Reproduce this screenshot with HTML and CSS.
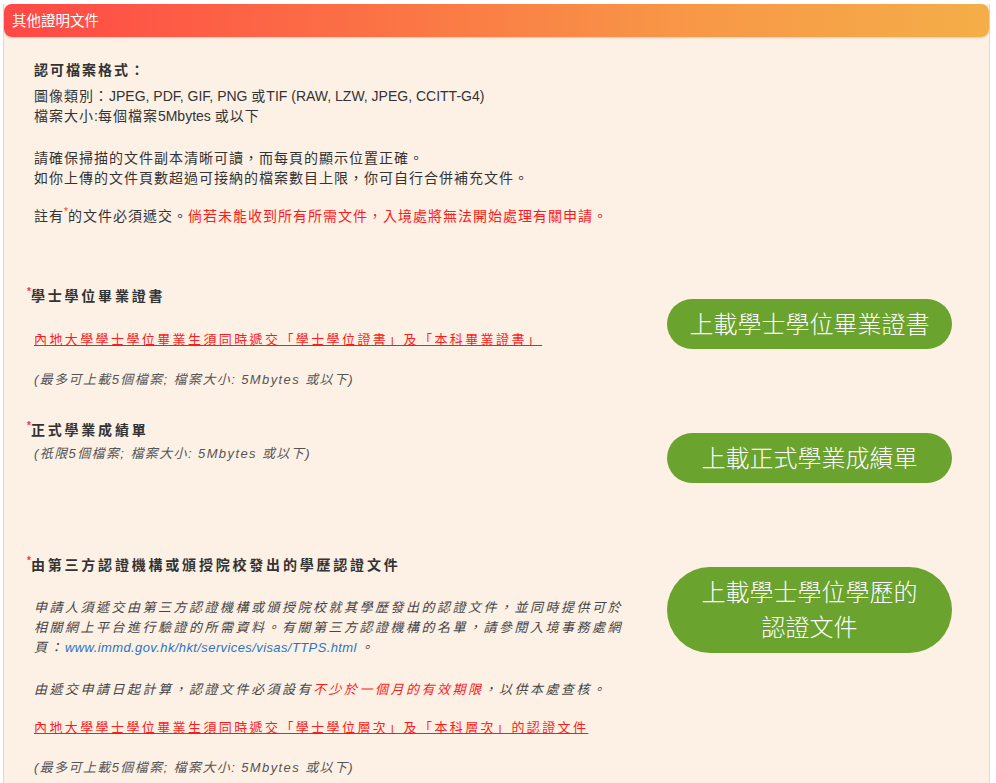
FILE: index.html
```html
<!DOCTYPE html>
<html lang="zh-Hant">
<head>
  <meta charset="UTF-8">
  <title>其他證明文件</title>
  <link rel="stylesheet" href="styles.css">
</head>
<body>
  <div class="panel">
    <div class="panel-head">其他證明文件</div>

    <div class="panel-body">
      <div class="formats">
        <h3 class="formats-title">認可檔案格式：</h3>
        <p class="line">圖像類別：<span class="en">JPEG, PDF, GIF, PNG </span>或<span class="en">TIF (RAW, LZW, JPEG, CCITT-G4)</span><br>檔案大小<span class="en">:</span>每個檔案<span class="en">5Mbytes </span>或以下</p>
        <p class="line gap1">請確保掃描的文件副本清晰可讀，而每頁的顯示位置正確。<br>如你上傳的文件頁數超過可接納的檔案數目上限，你可自行合併補充文件。</p>
        <p class="line gap2">註有<span class="star">*</span>的文件必須遞交。<span class="warn">倘若未能收到所有所需文件，入境處將無法開始處理有關申請。</span></p>
      </div>

      <!-- degree certificate -->
      <div class="doc doc-degree">
        <div class="doc-info">
          <h4 class="doc-title"><span class="star">*</span>學士學位畢業證書</h4>
          <a class="doc-link" href="#">內地大學學士學位畢業生須同時遞交「學士學位證書」及「本科畢業證書」</a>
          <p class="doc-limit">(最多可上載5個檔案; 檔案大小: 5Mbytes 或以下)</p>
        </div>
        <button class="upload-btn" type="button">上載學士學位畢業證書</button>
      </div>

      <!-- transcript -->
      <div class="doc doc-transcript">
        <div class="doc-info">
          <h4 class="doc-title"><span class="star">*</span>正式學業成績單</h4>
          <p class="doc-limit tight">(祇限5個檔案; 檔案大小: 5Mbytes 或以下)</p>
        </div>
        <button class="upload-btn" type="button">上載正式學業成績單</button>
      </div>

      <!-- third party verification -->
      <div class="doc doc-verify">
        <div class="doc-info">
          <h4 class="doc-title"><span class="star">*</span>由第三方認證機構或頒授院校發出的學歷認證文件</h4>
          <p class="doc-text first">申請人須遞交由第三方認證機構或頒授院校就其學歷發出的認證文件，並同時提供可於相關網上平台進行驗證的所需資料。有關第三方認證機構的名單，請參閱入境事務處網頁：<a class="url" href="#">www.immd.gov.hk/hkt/services/visas/TTPS.html</a>。</p>
          <p class="doc-text">由遞交申請日起計算，認證文件必須設有<span class="warn">不少於一個月的有效期限</span>，以供本處查核。</p>
          <a class="doc-link" href="#">內地大學學士學位畢業生須同時遞交「學士學位層次」及「本科層次」的認證文件</a>
          <p class="doc-limit">(最多可上載5個檔案; 檔案大小: 5Mbytes 或以下)</p>
        </div>
        <button class="upload-btn" type="button">上載學士學位學歷的<br>認證文件</button>
      </div>
    </div>
  </div>
</body>
</html>
```

FILE: styles.css
```css
body {
  margin: 0;
  padding: 4px 6px 0 3px;
  background: #ffffff;
  font-family: "Liberation Sans", Arial, "Noto Sans CJK TC", sans-serif;
  color: #333;
  font-size: 14px;
}

.panel {
  background: #fdf1e6;
  border-left: 1px solid #dedad6;
  border-right: 1px solid #dedad6;
  min-height: 800px;
}

.panel-head {
  height: 33px;
  line-height: 34px;
  padding-left: 8px;
  border-radius: 8px;
  background: linear-gradient(to right, #ff4845 0%, #fb7545 40%, #f89847 70%, #f4ae47 100%);
  box-shadow: 0 1px 2px rgba(0,0,0,0.15);
  color: #fff;
  font-size: 14.5px;
}

.panel-body {
  padding: 23px 37px 0 30px;
}

.formats-title {
  margin: 0 0 6px 0;
  font-size: 14px;
  line-height: 20px;
  letter-spacing: 2px;
  font-weight: bold;
}

.line {
  margin: 0;
  line-height: 20px;
  letter-spacing: 1px;
}

.en {
  letter-spacing: 0;
  line-height: 14px;
}

.gap1 { margin-top: 22px; }
.gap2 { margin-top: 18px; }

.star {
  color: #ff3030;
  font-size: 10px;
  vertical-align: top;
  line-height: 12px;
  letter-spacing: 0;
}

.warn {
  color: #ff1a1a;
}

.doc {
  display: flex;
  align-items: flex-start;
  justify-content: space-between;
  margin-left: -7px;
}

.doc-degree { margin-top: 60px; }
.doc-transcript { margin-top: 30px; }
.doc-verify { margin-top: 72px; }

.doc-info {
  display: flex;
  flex-direction: column;
  align-items: flex-start;
}

.doc-title {
  margin: 0;
  font-size: 14px;
  line-height: 20px;
  letter-spacing: 2.8px;
  font-weight: bold;
}

.doc-link {
  margin: 24px 0 0 7px;
  color: #ff1a1a;
  font-size: 13px;
  line-height: 20px;
  letter-spacing: 2.4px;
}

.doc-limit {
  margin: 20px 0 0 7px;
  color: #555;
  font-style: italic;
  font-size: 13px;
  line-height: 20px;
  letter-spacing: 1.4px;
}

.doc-limit.tight { margin-top: 4px; }

.doc-text {
  margin: 22px 0 0 7px;
  width: 595px;
  color: #444;
  font-style: italic;
  font-size: 13px;
  line-height: 20px;
  letter-spacing: 2.5px;
}

.doc-text.first { margin-top: 23px; }

.doc-verify .doc-link { margin-top: 18px; }

.url {
  margin-right: 3px;
  color: #2a73c5;
  text-decoration: none;
  letter-spacing: 0.4px;
}

.upload-btn {
  margin-top: 13px;
  width: 285px;
  min-height: 50px;
  padding: 6px 20px;
  border: none;
  border-radius: 26px;
  background: #6aa32e;
  color: #fff;
  font-family: "Liberation Sans", Arial, "Noto Sans CJK TC", sans-serif;
  font-size: 24px;
  font-weight: 300;
  line-height: 35px;
  cursor: pointer;
}

.doc-verify .upload-btn {
  margin-top: 12px;
  border-radius: 43px;
  padding: 8px 20px;
}
```
